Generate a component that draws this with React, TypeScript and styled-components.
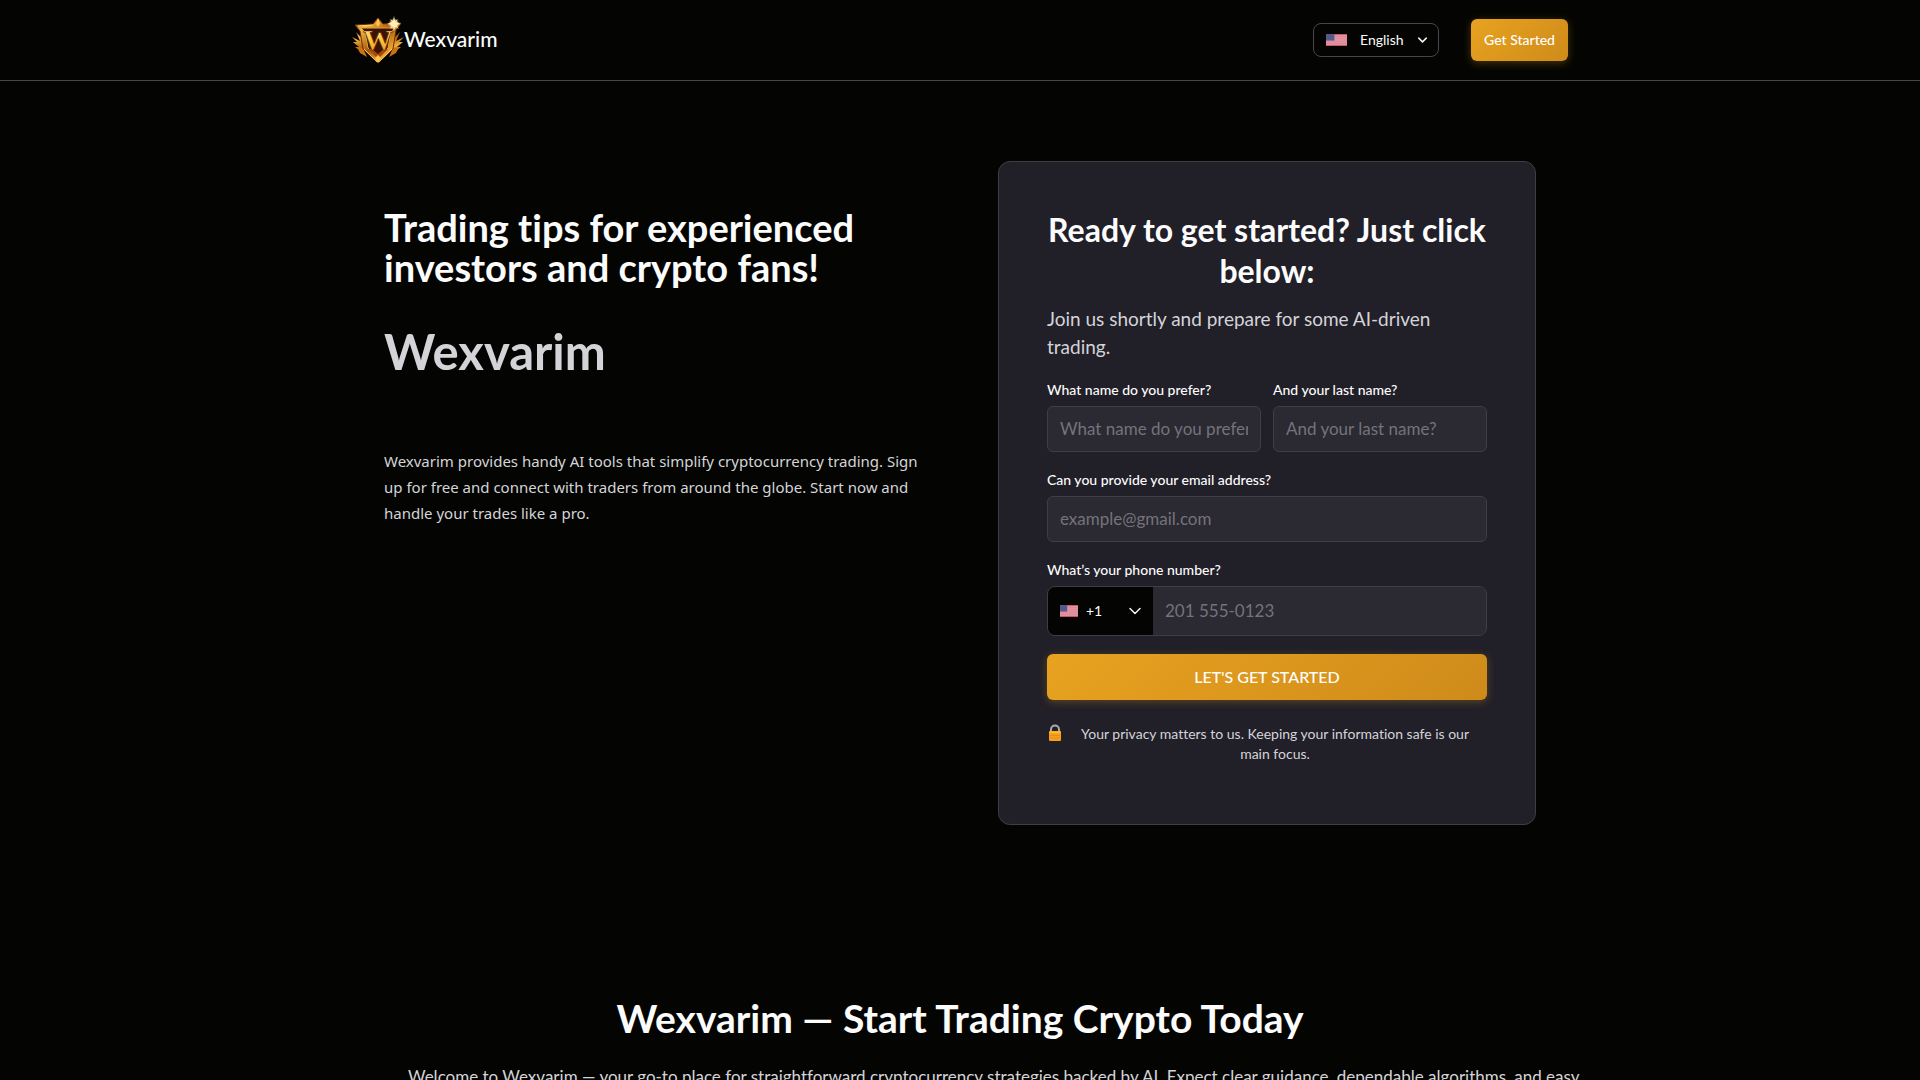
import React from "react";
import styled, { createGlobalStyle } from "styled-components";

const colors = {
  page: "#040502",
  card: "#211f28",
  field: "#2b2932",
  line: "#3f3e44",
  text: "#fcfcfc",
  muted: "#d4d4d8",
  hint: "#74737c",
};

const GlobalStyle = createGlobalStyle`
  *, *::before, *::after { box-sizing: border-box; }
  body {
    margin: 0;
    background: ${colors.page};
    color: ${colors.text};
    font-family: Lato, "Noto Sans", sans-serif;
    font-variant-ligatures: none;
    overflow-x: hidden;
  }
  h1, h2, p { margin: 0; }
  button, input, select { font-family: inherit; }
`;

const Header = styled.header`
  border-bottom: 1px solid #47464f;
`;

const HeaderInner = styled.div`
  max-width: 1280px;
  height: 80px;
  margin: 0 auto;
  padding: 0 32px;
  display: flex;
  align-items: center;
  justify-content: space-between;
`;

const Brand = styled.a`
  display: flex;
  align-items: center;
  color: ${colors.text};
  font-size: 21px;
  line-height: 28px;
  font-weight: 500;
  text-decoration: none;
  & > span {
    padding-bottom: 2px;
  }
`;

const Actions = styled.div`
  display: flex;
  align-items: center;
  gap: 32px;
`;

const LanguageBox = styled.label`
  display: flex;
  align-items: center;
  height: 34px;
  padding: 0 11px 0 12px;
  border: 1px solid #47464f;
  border-radius: 8px;
  gap: 13px;
`;

const PlainSelect = styled.select<{ $width: number }>`
  appearance: none;
  width: ${(p) => p.$width}px;
  padding: 0;
  border: 0;
  outline: 0;
  background: transparent;
  color: ${colors.text};
  font-size: 14px;
  line-height: 20px;
`;

const GoldButton = styled.button<{ $wide?: boolean }>`
  width: ${(p) => (p.$wide ? "100%" : "auto")};
  min-width: 97px;
  height: ${(p) => (p.$wide ? 46 : 42)}px;
  padding: 0 12px 2px;
  border: 0;
  border-radius: 6px;
  background: linear-gradient(135deg, #e8a220, #cf8b1a);
  box-shadow: 0 2px 8px rgba(232, 162, 32, 0.3);
  color: #fff;
  font-size: ${(p) => (p.$wide ? 16 : 14)}px;
  font-weight: 500;
  white-space: nowrap;
`;

const Hero = styled.section`
  max-width: 1280px;
  margin: 0 auto;
  padding: 80px 64px;
  display: grid;
  grid-template-columns: 1fr 1fr;
  gap: 76px;
`;

const Intro = styled.div`
  padding-top: 46px;
`;

const Tagline = styled.h2`
  font-size: 38px;
  line-height: 40px;
  font-weight: 700;
`;

const Name = styled.h1`
  margin-top: 36px;
  color: ${colors.muted};
  font-size: 49px;
  line-height: 56px;
  font-weight: 700;
`;

const Lead = styled.p`
  margin-top: 69px;
  color: ${colors.muted};
  font-family: "Noto Sans", sans-serif;
  font-size: 15px;
  line-height: 26px;
`;

const Card = styled.form`
  padding: 47px 48px 60px;
  border: 1px solid ${colors.line};
  border-radius: 12px;
  background: ${colors.card};
`;

const CardTitle = styled.h2`
  font-size: 32px;
  line-height: 41px;
  font-weight: 700;
  text-align: center;
`;

const CardText = styled.p`
  margin: 14px 0 19px;
  color: ${colors.muted};
  font-size: 19px;
  line-height: 28px;
`;

const Fields = styled.div`
  display: grid;
  grid-template-columns: 1fr 1fr;
  gap: 18px 12px;
`;

const Field = styled.div<{ $full?: boolean }>`
  grid-column: ${(p) => (p.$full ? "1 / -1" : "auto")};
  min-width: 0;
`;

const Label = styled.label`
  display: block;
  margin-bottom: 6px;
  font-size: 14px;
  line-height: 20px;
  font-weight: 500;
`;

const Input = styled.input`
  display: block;
  width: 100%;
  height: 46px;
  padding: 0 12px 2px;
  border: 1px solid ${colors.line};
  border-radius: 6px;
  outline: 0;
  background: ${colors.field};
  color: ${colors.text};
  font-size: 17px;
  &::placeholder {
    color: ${colors.hint};
    opacity: 1;
  }
`;

const PhoneBox = styled.div`
  display: flex;
  height: 50px;
  border: 1px solid ${colors.line};
  border-radius: 8px;
  overflow: hidden;
  background: ${colors.field};
  & > ${Input} {
    flex: 1;
    min-width: 0;
    height: 100%;
    border: 0;
    border-radius: 0;
  }
`;

const DialCode = styled.div`
  display: flex;
  align-items: center;
  gap: 8px;
  padding: 0 12px;
  background: ${colors.page};
`;

const Privacy = styled.div`
  display: flex;
  align-items: flex-start;
  margin-top: 24px;
  color: ${colors.muted};
  font-size: 14px;
  line-height: 20px;
  text-align: center;
  & > p {
    flex: 1;
    padding: 0 8px;
  }
`;

const About = styled.section`
  max-width: 1280px;
  margin: 0 auto;
  padding: 88px 0;
`;

const AboutTitle = styled.h2`
  font-size: 39px;
  line-height: 50px;
  font-weight: 700;
  text-align: center;
`;

const AboutText = styled.p`
  margin-top: 20px;
  padding-left: 88px;
  color: ${colors.muted};
  font-size: 17px;
  line-height: 28px;
`;

function Flag({ width, height }: { width: number; height: number }) {
  return (
    <svg width={width} height={height} viewBox="0 0 20 11" preserveAspectRatio="none" aria-hidden="true">
      <rect width="20" height="11" fill="#e39aa5" />
      {[0, 2, 4, 6, 8, 10].map((y) => (
        <rect key={y} y={y} width="20" height="1" fill={y === 0 || y === 10 ? "#cd5368" : "#d98794"} />
      ))}
      <rect width="8" height="6" fill="#57598d" />
    </svg>
  );
}

function Chevron({ width, height, stroke }: { width: number; height: number; stroke: number }) {
  return (
    <svg width={width} height={height} viewBox="0 0 12 8" fill="none" aria-hidden="true">
      <path d="M1 1.5l5 5 5-5" stroke="#f4f4f5" strokeWidth={stroke} strokeLinecap="round" strokeLinejoin="round" />
    </svg>
  );
}

function Lock() {
  return (
    <svg width="16" height="18" viewBox="0 0 16 18" aria-hidden="true">
      <path d="M4 8V5.5a4 4 0 0 1 8 0V8" fill="none" stroke="#a9abae" strokeWidth="2" />
      <rect x="2" y="7" width="12" height="10" rx="1" fill="#f7a01c" />
      <path d="M2.500 7.500h11v1.500h-11z" fill="#ffc21e" />
      <path d="M3 11.500h10M3 14h10" stroke="#e58a19" />
    </svg>
  );
}

function Logo() {
  return (
    <svg width="52" height="48" viewBox="0 0 52 48" aria-hidden="true">
      <defs>
        <linearGradient id="gold" x1="0" y1="0" x2="1" y2="1">
          <stop offset="0" stopColor="#9a4d0a" />
          <stop offset=".2" stopColor="#f5b840" />
          <stop offset=".5" stopColor="#a8560c" />
          <stop offset=".75" stopColor="#f0ab35" />
          <stop offset="1" stopColor="#8a3f08" />
        </linearGradient>
        <linearGradient id="letter" x1="0" y1="0" x2="0" y2="1">
          <stop offset="0" stopColor="#fff3a8" />
          <stop offset=".55" stopColor="#ffc23a" />
          <stop offset="1" stopColor="#e58a16" />
        </linearGradient>
        <radialGradient id="glow">
          <stop offset="0" stopColor="#fffdf0" />
          <stop offset=".45" stopColor="#ffe9a6" />
          <stop offset="1" stopColor="#ffbf40" stopOpacity="0" />
        </radialGradient>
      </defs>
      <path d="M0 21l8 4-4-9 7 7v14l-8-6 4 0-6-5 4 0zM52 21l-8 4 4-9-7 7v14l8-6-4 0 6-5-4 0z" fill="url(#gold)" />
      <path d="M5 31l6 1 4 9-7-4zM47 31l-6 1-4 9 7-4z" fill="#c87414" />
      <path d="M3 9l18-1 5-6 5 6 18-1-5 7-3 19-15 14L11 33 8 15z" fill="url(#gold)" stroke="#6e3004" strokeWidth="1" />
      <path d="M9 12h34l-4 4-3 16-10 10-10-10-3-16z" fill="#3b1203" stroke="#e8a636" strokeWidth="1" />
      <path d="M16 33l10 10 10-10-4 0-6 5-6-5z" fill="#a44b0a" />
      <path d="M26 2l2 6-2 3-2-3zM26 39l3 3-3 5-3-5z" fill="#ffc64a" />
      <path d="M6 10l15-1M12 33l13 13M40 33L27 46" stroke="#ffe27c" strokeWidth=".8" fill="none" />
      <text x="26" y="34" textAnchor="middle" fontFamily="Liberation Serif, serif" fontWeight="700" fontSize="30" fill="url(#letter)" stroke="#5a2203" strokeWidth=".6">
        W
      </text>
      <circle cx="42" cy="8" r="6" fill="url(#glow)" />
      <path d="M42 0l1 5 3-2-2 3 5 2-5 1 3 4-4-3-1 5-1-5-3 3 2-4-5-1 5-2-2-3 3 2z" fill="#fff0c0" />
    </svg>
  );
}

export default function App() {
  return (
    <>
      <GlobalStyle />
      <Header>
        <HeaderInner>
          <Brand href="#">
            <Logo />
            <span>Wexvarim</span>
          </Brand>
          <Actions>
            <LanguageBox>
              <Flag width={21} height={12} />
              <PlainSelect $width={45} aria-label="Language" defaultValue="en">
                <option value="en">English</option>
              </PlainSelect>
              <Chevron width={9} height={6} stroke={2} />
            </LanguageBox>
            <GoldButton type="button">Get Started</GoldButton>
          </Actions>
        </HeaderInner>
      </Header>
      <main>
        <Hero>
          <Intro>
            <Tagline>Trading tips for experienced investors and crypto fans!</Tagline>
            <Name>Wexvarim</Name>
            <Lead>
              Wexvarim provides handy AI tools that simplify cryptocurrency trading. Sign up for free and connect with
              traders from around the globe. Start now and handle your trades like a pro.
            </Lead>
          </Intro>
          <Card onSubmit={(e) => e.preventDefault()}>
            <CardTitle>Ready to get started? Just click below:</CardTitle>
            <CardText>Join us shortly and prepare for some AI-driven trading.</CardText>
            <Fields>
              <Field>
                <Label htmlFor="first">What name do you prefer?</Label>
                <Input id="first" placeholder="What name do you prefer?" />
              </Field>
              <Field>
                <Label htmlFor="last">And your last name?</Label>
                <Input id="last" placeholder="And your last name?" />
              </Field>
              <Field $full>
                <Label htmlFor="email">Can you provide your email address?</Label>
                <Input id="email" type="email" placeholder="example@gmail.com" />
              </Field>
              <Field $full>
                <Label htmlFor="phone">What’s your phone number?</Label>
                <PhoneBox>
                  <DialCode>
                    <Flag width={18} height={12} />
                    <PlainSelect $width={35} aria-label="Country code" defaultValue="1">
                      <option value="1">+1</option>
                    </PlainSelect>
                    <Chevron width={12} height={8} stroke={1.5} />
                  </DialCode>
                  <Input id="phone" type="tel" placeholder="201 555-0123" />
                </PhoneBox>
              </Field>
              <Field $full>
                <GoldButton type="submit" $wide>
                  LET'S GET STARTED
                </GoldButton>
              </Field>
            </Fields>
            <Privacy>
              <Lock />
              <p>Your privacy matters to us. Keeping your information safe is our main focus.</p>
            </Privacy>
          </Card>
        </Hero>
        <About>
          <AboutTitle>Wexvarim — Start Trading Crypto Today</AboutTitle>
          <AboutText>
            Welcome to Wexvarim — your go-to place for straightforward cryptocurrency strategies backed by AI. Expect
            clear guidance, dependable algorithms, and easy
          </AboutText>
        </About>
      </main>
    </>
  );
}
